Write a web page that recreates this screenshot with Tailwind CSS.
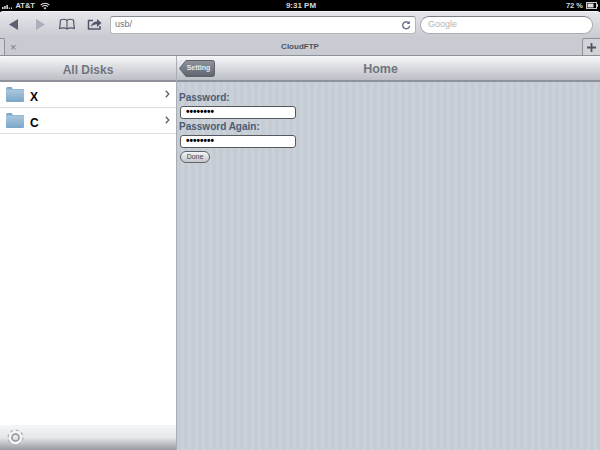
<!DOCTYPE html>
<html>
<head>
<meta charset="utf-8">
<script src="https://cdn.jsdelivr.net/npm/@tailwindcss/browser@4"></script>
</head>
<body class="m-0">
<div class="w-[600px] h-[450px] overflow-hidden flex flex-col bg-black font-['Liberation_Sans',Arial,sans-serif]">
  <!-- status bar -->
  <div class="h-[11px] shrink-0 bg-black text-[#d8d8d8] text-[8px] font-bold leading-[11px] grid grid-cols-3 pl-[2px]">
    <div class="flex items-center gap-[2px]">
      <svg width="12" height="7" viewBox="0 0 12 7"><path fill="#ddd" d="M0 5h1.500v2H0zM2.200 4h1.500v3H2.200zM4.400 3h1.500v4H4.400zM6.800 5.500h1V7h-1zM9 5.500h1V7H9z"/></svg>
      <span class="text-[7.5px] -ml-[0.5px]">AT&amp;T</span>
      <svg class="ml-[3px]" width="10" height="8" viewBox="0 0 11 8" fill="none" stroke="#ddd" stroke-width="1.200"><path d="M.7 3a6.800 6.800 0 0 1 9.600 0M2.300 4.700a4.500 4.500 0 0 1 6.400 0"/><path d="M5.500 7.800 3.900 6.200a2.300 2.300 0 0 1 3.200 0z" fill="#ddd" stroke="none"/></svg>
    </div>
    <div class="text-center">9:31 PM</div>
    <div class="flex justify-end items-center gap-[3px] pr-[2px]">
      <span class="text-[7.5px]">72 %</span>
      <svg width="12" height="7" viewBox="0 0 12 7"><rect x=".5" y=".5" width="10" height="6" fill="none" stroke="#ccc"/><rect x="1.500" y="1.500" width="6" height="4" fill="#ddd"/><rect x="11" y="2" width="1" height="3" fill="#ccc"/></svg>
    </div>
  </div>
  <!-- browser chrome -->
  <div class="h-[45px] shrink-0 rounded-t-[3px] border-t border-t-[#f4f4f6] border-b border-b-[#8f9199] flex flex-col bg-[#c9cbd2]">
    <div class="h-[26px] shrink-0 bg-gradient-to-b from-[#e6e7ea] to-[#c8cad1] flex pt-[4px] relative">
      <svg class="shrink-0" width="110" height="22" viewBox="0 0 110 22">
        <path d="M9 8.500 18 3v11z" fill="#5a6170"/>
        <path d="M45 8.500 36 3v11z" fill="#a9afbb"/>
        <path d="M60.500 4c2.500-1 5-1 6.500.5 1.500-1.500 4-1.500 6.500-.5l.8 8.500c-2.500-.8-5.500-.8-7.300.5-1.800-1.300-4.800-1.300-7.300-.5z" fill="none" stroke="#50576a" stroke-width="1.200"/>
        <path d="M67 4.500V13" stroke="#50576a" stroke-width="1.100"/>
        <path d="M93 4.500h-4.500v8.500h11.500v-3" fill="none" stroke="#50576a" stroke-width="1.500"/>
        <path d="M91 11c.4-3.500 2.800-5.400 6-5.400V3l4.500 4-4.500 4V8.300c-2.700 0-4.500.8-6 2.700z" fill="#50576a"/>
      </svg>
      <div class="w-[306px] h-[18px] shrink-0 bg-white rounded-[3px] border border-[#b4b6bc] border-t-[#8b8d94] flex items-center px-[4px] text-[9px] text-[#6f7279]">
        <span class="flex-1">usb/</span>
        <svg width="10" height="10" viewBox="0 0 10 10" fill="none" stroke="#62718b" stroke-width="1.400"><path d="M8 3.200A3.500 3.500 0 1 0 8.600 6"/><path d="M8.800 .8v3.200H5.700z" fill="#62718b" stroke="none"/></svg>
      </div>
      <div class="w-[173px] h-[18px] ml-[4px] shrink-0 bg-white rounded-full border border-[#a9abb2] border-t-[#7c7e85] flex items-center px-[7px] text-[9px] text-[#b5b5b8]">Google</div>
    </div>
    <div class="flex-1 flex items-end justify-between relative">
      <div class="w-[5px] h-[17px] bg-[#d2d3d7] border-r border-t border-[#8f9198] rounded-tr-[2px]"></div>
      <span class="absolute left-[10px] top-[3px] text-[11px] leading-[13px] text-[#777b84]">×</span>
      <span class="absolute inset-x-0 top-[3px] text-center text-[8px] leading-[11px] font-bold text-[#50535c]">CloudFTP</span>
      <div class="w-[18px] h-[17px] bg-[#d2d3d7] border-l border-t border-[#8f9198] rounded-tl-[2px] flex items-center justify-center">
        <svg width="9" height="9" viewBox="0 0 9 9"><path d="M3.600 0h1.800v3.600H9v1.800H5.400V9H3.600V5.400H0V3.600h3.600z" fill="#4e5564"/></svg>
      </div>
    </div>
  </div>
  <!-- split view -->
  <div class="flex-1 min-h-0 flex bg-white">
    <div class="w-[176px] shrink-0 flex flex-col">
      <div class="h-[26px] shrink-0 rounded-tl-[3px] bg-gradient-to-b from-[#f6f7f8] to-[#bcbfc6] border-b-2 border-[#8f929d] flex items-center justify-center pt-[3px] text-[12px] font-bold text-[#70757f]">All Disks</div>
      <div class="h-[26px] border-b border-[#dfdfdf] flex items-center pl-[6px] pr-[6px]">
        <svg width="18" height="15" viewBox="0 0 18 15"><defs><linearGradient id="f1" x1="0" y1="0" x2="0" y2="1"><stop offset="0" stop-color="#6f9fc2"/><stop offset=".25" stop-color="#a8c5db"/><stop offset="1" stop-color="#7aa6c8"/></linearGradient></defs><path d="M0 1.500 1 0h4.500L7 2h11v12a1 1 0 0 1-1 1H1a1 1 0 0 1-1-1z" fill="url(#f1)"/></svg>
        <span class="ml-[6px] pt-[4px] flex-1 text-[12px] font-bold text-black">X</span>
        <svg class="-mt-[1px]" width="5" height="8" viewBox="0 0 5 8" fill="none" stroke="#666" stroke-width="1.400"><path d="m.8.800 3 3.200-3 3.200"/></svg>
      </div>
      <div class="h-[26px] border-b border-[#dfdfdf] flex items-center pl-[6px] pr-[6px]">
        <svg width="18" height="15" viewBox="0 0 18 15"><path d="M0 1.500 1 0h4.500L7 2h11v12a1 1 0 0 1-1 1H1a1 1 0 0 1-1-1z" fill="url(#f1)"/></svg>
        <span class="ml-[6px] pt-[4px] flex-1 text-[12px] font-bold text-black">C</span>
        <svg class="-mt-[1px]" width="5" height="8" viewBox="0 0 5 8" fill="none" stroke="#666" stroke-width="1.400"><path d="m.8.800 3 3.200-3 3.200"/></svg>
      </div>
      <div class="flex-1"></div>
      <div class="h-[25px] shrink-0 rounded-tl-[3px] bg-gradient-to-b from-[#f5f6f7] via-[#e6e7ea] to-[#989aa3] flex items-center pl-[7px]">
        <svg width="17" height="17" viewBox="0 0 17 17" fill="none"><circle cx="8.500" cy="8.500" r="7" stroke="#b4b6bd" stroke-width="2" stroke-dasharray="2.900 2.600"/><circle cx="8.500" cy="8.500" r="5.200" stroke="#f6f6f8" stroke-width="3"/><circle cx="8.500" cy="8.500" r="3.600" stroke="#8e9098" stroke-width="1.500"/></svg>
      </div>
    </div>
    <div class="flex-1 flex flex-col border-l border-[#a9adb4] bg-[repeating-linear-gradient(90deg,#c5ccd4_0,#c5ccd4_4px,#cad1d8_4px,#cad1d8_7px)]">
      <div class="h-[26px] shrink-0 bg-gradient-to-b from-[#f6f7f8] to-[#bcbfc6] border-b-2 border-[#8f929d] relative flex items-center justify-center pr-[16px] pt-[3px] text-[12.5px] font-bold text-[#70757f]">
        <div class="absolute left-[2px] top-[4px] w-[36px] h-[17px] flex items-center justify-center text-[7px] font-bold text-[#e8e9eb] pl-[3px]">
          <svg class="absolute inset-0" width="36" height="17" viewBox="0 0 36 17"><defs><linearGradient id="b1" x1="0" y1="0" x2="0" y2="1"><stop offset="0" stop-color="#8f949c"/><stop offset="1" stop-color="#5f656f"/></linearGradient></defs><path d="M.5 8.500 7 .5h26.500a2 2 0 0 1 2 2v12a2 2 0 0 1-2 2H7z" fill="url(#b1)" stroke="#5c616a"/></svg>
          <span class="relative">Setting</span>
        </div>
        <span>Home</span>
      </div>
      <div class="pl-[2px] pt-[10px] flex flex-col items-start">
        <label class="h-[12px] text-[10px] leading-[12px] font-bold text-[#4e5a72]">Password:</label>
        <div class="mt-[2px] ml-[1px] w-[116px] h-[13px] bg-white border border-[#55585f] rounded-[3px] pl-[5px] text-[10px] leading-[10px] font-bold text-black">••••••••</div>
        <label class="mt-[2px] h-[12px] text-[10px] leading-[12px] font-bold text-[#4e5a72]">Password Again:</label>
        <div class="mt-[2px] ml-[1px] w-[116px] h-[13px] bg-white border border-[#55585f] rounded-[3px] pl-[5px] text-[10px] leading-[10px] font-bold text-black">••••••••</div>
        <button class="mt-[3px] ml-[1px] w-[30px] h-[12px] rounded-full border border-[#5f636b] bg-gradient-to-b from-[#f4f4f5] to-[#c4c6ca] text-[7px] leading-[10px] text-[#444]">Done</button>
      </div>
    </div>
  </div>
</div>
</body>
</html>
